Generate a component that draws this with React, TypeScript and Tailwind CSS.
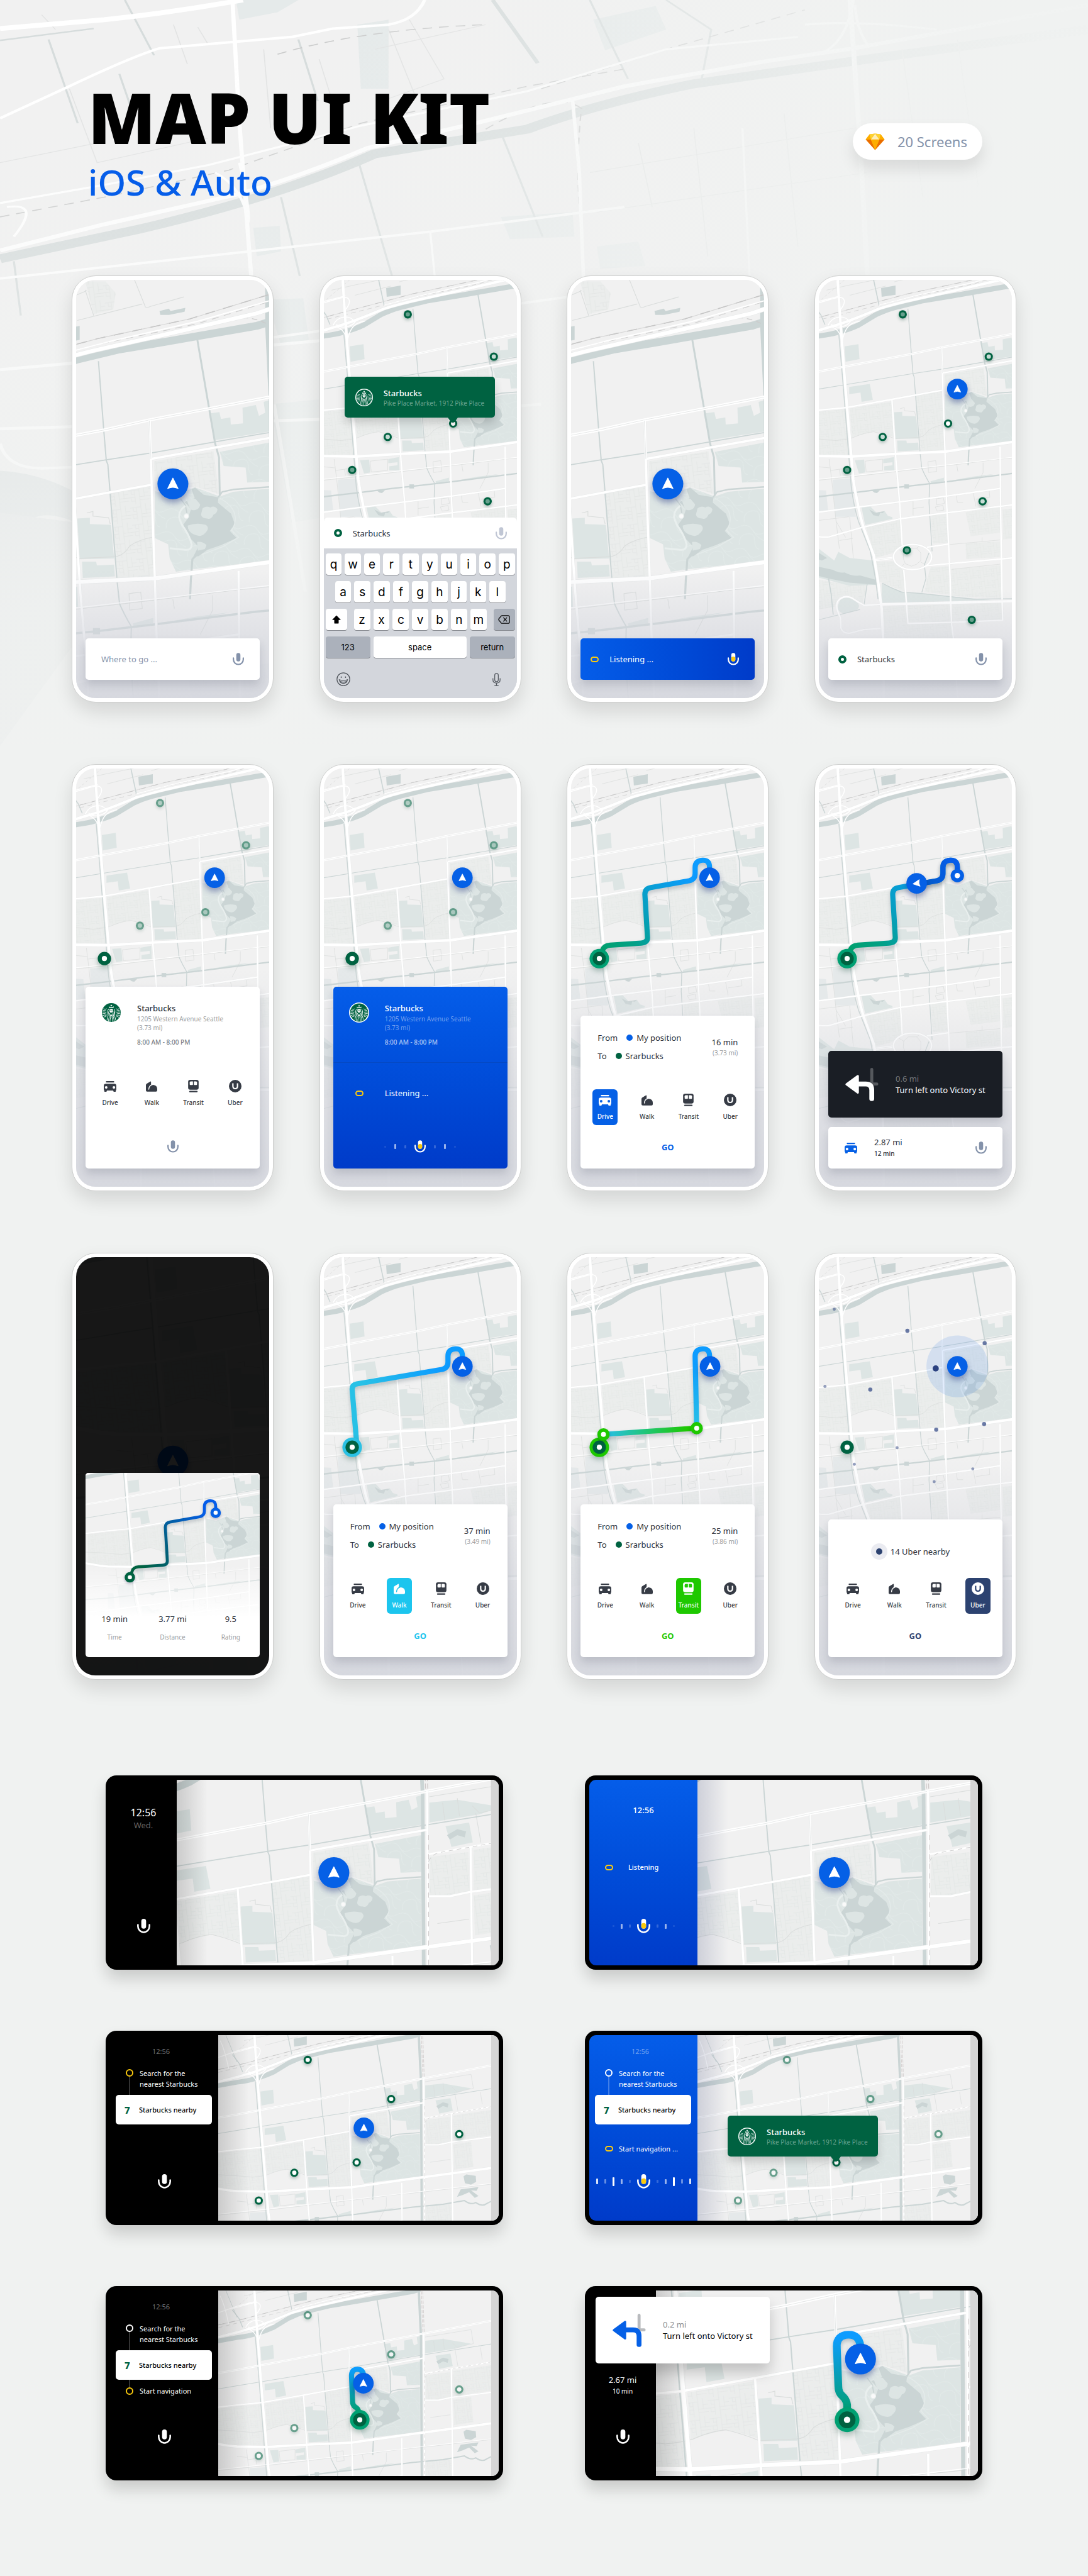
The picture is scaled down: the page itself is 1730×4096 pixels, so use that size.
import React from "react";

/* ------------------------------------------------------------------ */
/* Shared drawing data                                                  */
/* ------------------------------------------------------------------ */

const MAJOR_ROADS = [
  "M-60,333 L-20,340 L0,342 L63,343 L148,338 L245,333.5 L290,327 L375,315 L398,312 L560,290",
  "M36,-10 L40,54 L43,94 L46,134 L50,188 L55,250 L62,330 L67,388 Q70,410 75,431 Q80,460 88,484 L107,536 L115,585 L122,638 L125,700 L126,820",
  "M-60,113 L0,98 L43,85 Q80,72 117,56 Q150,46 187,38 L267,20 L375,-5 L420,-20",
  "M120,630 L375,624 L560,616",
];

const MID_ROADS = [
  "M-60,260 L0,253 L53,248 L142,232 L240,214",
  "M240,181 L375,157 L398,153",
  "M238.5,131 L240,181 L242,250 L245,333 L248,429 L251,491 L255,580 L256,625 L258,670 L262,700 L270,820",
  "M142,232 L147,308 L150,353 L157,433 L162,516",
  "M165,563 L170,625 L173,667 L257,665 L357,661 L356,625",
  "M-60,456 L0,451 L77,441 L248,420 L352,405",
  "M-10,497 Q5,500 20,499 L83,481 L157,464 L250,452 L375,437",
  "M352,324 L353,446 L356,621",
  "M210,519 L252,513",
  "M208,555 L375,540",
  "M120,630 L88,632 Q75,625 63,617 Q47,611 37,624 Q31,634 42,656 L43,676 Q47,687 60,686 L87,679 L120,677",
  "M401,243 L430,243 L458,237 L560,224",
  "M458,175 L461,410",
  "M399,100 L401,420",
  "M219,538 C219,551 203,562.5 182,562.5 C161,562.5 145,551 145,538 C145,525 161,513.5 182,513.5 C203,513.5 219,525 219,538 Z",
];

const DOUBLE_ROADS = [
  "M-60,188 L0,178 L47,169 L180,144 L238.5,131 L313,117 L375,105 L398,100.7 L560,70",
  "M110,544 L143,540",
];

const RAMPS = [
  "M-10,47 C20,40 30,34 42,34 C53,36 52,47 40,60",
  "M-40,56 L0,42 L42,31",
  "M12,93 C30,85 42,102 45,118",
  "M80,80 C50,85 50,105 45,118",
  "M18,88 C28,68 52,68 60,82",
  "M24,86 C34,96 54,92 62,80",
  "M-36,20 Q-26,40 -18,80",
];

const CANALS: { d: string; w: number }[] = [
  { d: "M-60,120 L0,109 Q25,106 40,101 Q60,96 77,88 L110,68 Q130,58 150,53 L200,41 L260,31 L300,24 L375,11 L391,6", w: 10 },
  { d: "M173,56 L180,147 L183,183 L185,188 L197,339 L200,366 Q206,380 215,395 L214,433 L220,527", w: 1.6 },
  { d: "M214,530 L205,553 L208,580 L200,607", w: 1.6 },
  { d: "M299,27 L322,161 L327,179 L328,228", w: 2.4 },
  { d: "M39,107 L47,201 L58,339 L63,402 Q68,440 77,469 L100,527 L110,580 L115,620", w: 1.8 },
  { d: "M-60,222 L0,212 L55,203 L183,182 L242,173 L375,150 L560,120", w: 1.4 },
  { d: "M-60,425 L0,421 L70,413 L133,405 L170,401 L213,396 L247,392 L375,376 L440,370 L486,362 Q500,372 510,366 Q524,376 534,368 L550,360", w: 2.8 },
  { d: "M106,-2 L117,49", w: 2 },
  { d: "M-10,50 L4,68 L12,87", w: 1.8 },
  { d: "M-30,-6 L0,66", w: 1.2 },
  { d: "M388.5,-60 L388.5,11 L393,106 L395,430", w: 5 },
  { d: "M301,301 L293,309 L291,336 L290,360", w: 2.6 },
  { d: "M326,230 L331,223 L345,220 L391,216.7", w: 2 },
  { d: "M278,232 L284,240 L286,250", w: 1.4 },
  { d: "M123,589 Q140,598 160,606 L200,609 L300,620 L375,619", w: 1.6 },
  { d: "M19,580 L24,610 L28,650", w: 2 },
  { d: "M94,590 L88,630", w: 1.6 },
  { d: "M0,660 L40,650 L80,640", w: 1.4 },
];

const LIGHT_BLOCKS = [
  "M60,250 L141,236 L147,306 Q125,298 107,295 Q88,299 64,306 Z",
  "M-50,262 L0,256 L53,251 L60,308 L62,340 L0,340 L-50,334 Z",
  "M187,224 L239,216 L244,331 L198,335 Z",
  "M244,184 L320,171 L327,226 L296,216 L275,218 L245,222 Z",
  "M92,480 L158,466 L163,516 L145,530 L110,540 Z",
  "M285,451 L352,440 L352,491 L295,498 Z",
  "M285,512 L352,508 L353,538 L286,542 Z",
  "M257,562 L353,554 L355,618 L258,614 Z",
  "M217,558 L252,556 L254,611 L205,606 L210,582 Z",
  "M112,547 L146,546 L165,566 L170,607 L118,586 Z",
  "M218,456 L249,453 L252,510 L221,512 Z",
  "M357,446 L391,442 L392,500 L358,504 Z",
  "M125,634 L256,630 L262,700 L270,820 L128,820 Z",
  "M259,630 L355,627 L356,659 L258,663 Z",
  "M0,582 L60,592 L94,592 L84,632 L60,613 L40,616 L30,635 L0,640 Z",
  "M403,190 L455,183 L457,236 L430,242 L403,242 Z",
  "M462,180 L545,168 L545,222 L462,235 Z",
  "M156,-46 L182,-46 L195,-31 L192,-10 L167,-4 Z",
  "M402,374 L458,370 L460,420 L402,420 Z",
  "M462,242 L500,236 L505,290 L464,296 Z",
];

const PARKS = [
  "M50,129 L77,125 L79,154 L52,159 Z",
  "M59,208 L99,202 L105,233 L83,237 L81,219 L59,222 Z",
  "M146,257 L162,256 L162,264 L189,265 L193,308 L149,309 Z",
  "M152,312 L170,312 L171,317 L193,316 L194,331 L153,333 Z",
  "M70,350 L88,349 L90,374 L78,376 Z",
  "M125,348 L146,344 L147,370 L127,370 L127,362 L143,360 L143,354 L125,356 Z",
  "M314,123 L327.5,121 L329.5,130 L341.5,128 L342,137 L357.6,135.6 L357,115.5 L374,112 L378,126 L386,122 L384,108 L391,106 L391,146 L321,157 Z",
  "M328,172 L391,160 L391,210 L363,211 L361,192 L333,190 Z",
  "M245,222 L270,228 L296,217 L328,229 L345,223 L391,219 L391,311 L293,322 L272,325 L264,308 L262,290 L245,282 Z",
  "M83,442 L100,440 L112,452 L128,449 L134,458 L143,461 L143,464 L90,476 Z",
  "M0,522 L30,545 L38,528 L60,540 L107,545 L112,592 L60,594 L0,578 Z",
  "M122,590 L167,607 L253,614 L340,622 L122,629 Z",
  "M42,620 Q60,612 76,628 Q84,640 60,646 Q40,652 36,636 Z",
  "M217,391 L243,384 L243,391 L218,396 Z",
  "M250,391 L300,382 L340,377 L300,386 Z",
  "M424,148 L456,143 L461,170 L432,176 L430,168 Z",
  "M402,116 L440,112 L500,122 L470,132 L402,143 Z",
];

const WATER = [
  "M296.6,217.5 L307.4,226.7 L326.3,230 L325.5,236.7 L342.3,250.8 L347.2,264 L340.7,272.9 L349.6,282 L329.5,291 L312,297 L301,305 L294,306 L300.6,293 L287.3,279 L281.3,264.9 L287.3,256.8 L291.4,244.8 L283,236 L296,231 L292,220 Z",
  "M121,16 L149,11 L149,29 L122,33 Z",
  "M98,446 L110,452 L128,449 L124,453 L119,452 L117,459 L106,457 Z",
  "M0,557 L27,563 Q40,570 50,568 Q66,576 80,574 L110,582 L111,592 L60,588 L20,580 L0,575 Z",
  "M0,530 L16,540 L6,545 L0,543 Z",
  "M166,397 H175 V405 H166 Z",
  "M103,409 L108,413 L113,414 L119,408 Z",
  "M251,-8 L263,-11 L265,-8 L284,-12 L283,-7 L263,-3 L252,-3 Z",
  "M484,310 L490,306 L510,309 L511,322 L500,328 L487,325 Z",
  "M470,354 L478,338 L516,333 L512,341 L500,340 L516,352 L508,356 L496,344 L482,350 Z",
  "M426,160 L440,152 L452,155 L450,163 L440,160 L430,166 Z",
];

const ISLANDS = [
  "M286,234 Q291,230 297,232 L303,239 Q302,245 297,246 Q291,248 289,242 Z",
  "M306,244 Q311,240 316,243 Q321,240 325,245 Q325,250 320,252 Q317,259 312,257 Q305,257 304,252 Z",
  "M287,266 Q298,262 310,265 Q316,269 309,276 Q304,282 294,277 Q287,273 287,266 Z",
  "M299,287 Q306,286 311,291 L309,296 L300,298 Z",
];

const GREY_STREETS = [
  "M-60,306 Q0,308 33,312 Q55,310 67,306 Q90,296 107,295 Q128,300 147,308 L192,306 Q204,306 213,292 Q225,284 242,281",
  "M-60,395 L0,389 L67,382 L247,361 L352,348 L375,346 L560,325",
  "M20,348 L25,388 L33,464 L40,522",
  "M0,467 L58,460",
  "M60,460 L67,540",
  "M0,363 L21,365 M23,370 L45,367 M40,368 L42,380",
  "M33,468 L52,500 M40,506 L66,502",
  "M212,353 L227,351 L229,372 L213,374 Z",
  "M228,425 L242,423 L244,434 L229,437 Z",
  "M226,441 L241,438 L243,447 L230,449 Z",
  "M319,355 L319,374 L303,405",
  "M268,360 L270,372",
  "M183,430 V457 M183,444 L204,441",
  "M267,418 L269,432 H280 M300,414 L305,440 M331,410 L332,422 L305,426",
  "M252,514 L320,508 L352,505",
  "M258,562 L352,552",
  "M165,529 L174,521 L190,521 L198,530 L198,545 L190,552 L180,556 L168,551 L164,541 Z M166,530 L156,524 M190,521 L196,516 M166,551 L160,557 M198,548 L207,553",
  "M146,4 L229,-17 M219,-48 L233,-13 Q236,-12 240,-14 L282,-26",
  "M156,-35 L167,-2 M144,-28 L158,-34",
  "M317,500 V508",
  "M420,116 L423,140 M440,110 L443,134 M460,120 L470,130 L505,122 L500,92 L402,108",
  "M413,280 L456,274",
  "M465,130 L472,170 M520,130 L524,156",
  "M15,20 L60,10 L140,-6",
  "M60,30 L130,12",
  "M90,352 L124,348 L124,370 L92,373 Z",
  "M158,250 L166,248 L166,254 L186,256 L188,264",
];

const BACKDROP_WHITE: { d: string; w: number }[] = [
  { d: "M0,58 L150,40 Q250,25 350,0", w: 10 },
  { d: "M0,240 L100,175 Q190,115 230,98 L420,75 L480,58 L560,50 Q600,40 612,0", w: 5 },
  { d: "M0,508 L150,455 L340,395 Q430,360 530,300 L700,245 L900,175 L1100,125 L1230,98 L1400,55 L1568,10", w: 8 },
  { d: "M0,412 L150,375 L300,335 L520,255 L760,185 L960,100 L1150,75", w: 4 },
  { d: "M335,0 L345,250 L362,560", w: 6 },
  { d: "M825,200 L835,350 L850,900", w: 5 },
  { d: "M1225,0 L1240,300 L1250,560", w: 7 },
  { d: "M1180,110 Q1220,90 1230,0 M1250,90 Q1235,60 1232,10 M1160,50 Q1230,40 1350,60", w: 4 },
  { d: "M10,420 Q60,410 20,480 M345,330 Q360,420 358,450 Q350,380 310,350", w: 4 },
  { d: "M0,565 L620,470 L900,420 M390,685 L830,600", w: 5 },
  { d: "M620,470 L628,580 M1070,260 L1085,700", w: 3 },
  { d: "M0,750 L470,690 M0,870 L480,850 L780,820", w: 6 },
  { d: "M0,900 Q10,950 60,950 L240,940 M395,820 L440,1200", w: 5 },
];

const BACKDROP_TEAL: { d: string; w: number }[] = [
  { d: "M0,525 L200,465 Q400,400 540,312 L760,262 Q860,210 1000,170 L1260,118 L1568,60", w: 18 },
  { d: "M70,80 L112,250 M180,0 L222,112 M172,150 L188,215 M430,80 L458,205", w: 3 },
  { d: "M710,0 L775,128", w: 6 },
  { d: "M850,0 L905,160 M960,0 L1025,60 L1010,170", w: 3 },
  { d: "M720,262 L782,480 M515,320 L565,560 M405,400 L432,560", w: 3 },
  { d: "M0,82 L135,58 M20,530 L30,640", w: 3 },
];

/* ------------------------------------------------------------------ */
/* Shared SVG definitions                                               */
/* ------------------------------------------------------------------ */

function SharedDefs() {
  return (
    <svg className="absolute size-0" aria-hidden="true">
      <defs>
        <pattern id="streets" width="26" height="22" patternUnits="userSpaceOnUse" patternTransform="rotate(-7)">
          <path
            d="M0,4 H14 V0 M14,4 V13 H26 M0,13 H8 V22 M8,13 V4 M20,0 V13 M14,17 H26 M14,13 V22 M3,13 V18 H8 M20,8 H26 M4,4 V9 H8"
            fill="none"
            stroke="#e2e5e4"
            strokeWidth="0.6"
          />
        </pattern>
        <pattern id="footpaths" width="34" height="30" patternUnits="userSpaceOnUse" patternTransform="rotate(12)">
          <path
            d="M0,6 Q10,0 17,8 T34,6 M4,30 Q0,18 10,14 T22,20 T30,30 M17,8 Q24,16 34,18"
            fill="none"
            stroke="#e5eceb"
            strokeWidth="0.6"
          />
        </pattern>
        <g id="city-map">
          <rect x="-400" y="-200" width="1300" height="1200" fill="#f1f1f1" />
          {LIGHT_BLOCKS.map((d) => (
            <g key={d}>
              <path d={d} fill="#ebedec" />
              <path d={d} fill="url(#streets)" />
            </g>
          ))}
          <path d="M27,388 L63,386 L72,460 L32,460 Z M0,408 L14,409 L18,447 L0,449 Z" fill="#e5e9ea" />
          {PARKS.map((d) => (
            <path key={d} d={d} fill="#dde5e4" />
          ))}
          <path d={PARKS[7]} fill="url(#footpaths)" />
          <path d={PARKS[8]} fill="url(#footpaths)" />
          <g fill="none" stroke="#dadddc" strokeWidth="0.9">
            {GREY_STREETS.map((d) => (
              <path key={d} d={d} />
            ))}
          </g>
          <g fill="none" stroke="#cbd5d5" strokeLinejoin="round">
            {CANALS.map((c) => (
              <path key={c.d} d={c.d} strokeWidth={c.w} />
            ))}
          </g>
          {WATER.map((d) => (
            <path key={d} d={d} fill="#cbd5d5" />
          ))}
          {ISLANDS.map((d) => (
            <path key={d} d={d} fill="#dde5e4" />
          ))}
          <path
            d="M284,241 Q276,246 276,255 Q278,264 283,270 Q290,281 292,290 Q292,298 284,297 L264,295"
            fill="none"
            stroke="#e9efee"
            strokeWidth="2.4"
          />
          <path
            d="M328,231 Q344,240 347,251 Q350,262 343,272 L352,281 L332,293 L305,303"
            fill="none"
            stroke="#e4ebea"
            strokeWidth="1.2"
          />
          <circle cx="285.3" cy="254" r="3" fill="#fafafa" stroke="#e9efee" strokeWidth="1" />
          <g fill="none">
            <path d="M-40,82 L0,73 L173,27 L290,2 L391,-29" stroke="#d6d6d6" strokeWidth="0.9" />
            <path d="M-40,82 L0,73 L173,27 L290,2 L391,-29" stroke="#c6c6c6" strokeWidth="1.2" strokeDasharray="13 11" />
            <path d="M-40,88 L0,78 L176,34 L300,8 L391,-20" stroke="#d0d0d0" strokeWidth="1" strokeDasharray="9 7" />
            <path d="M322,8 L340,3 Q368,-4 391,10" stroke="#cccccc" strokeWidth="1" strokeDasharray="7 5" />
            <path d="M5,38 L50,0" stroke="#d8d8d8" strokeWidth="0.8" strokeDasharray="5 4" />
            <path d="M394,-30 L394,11 L397,100 M397,-30 L397,11 L400,100" stroke="#cfc9c9" strokeWidth="1.1" strokeDasharray="7 3" />
          </g>
          <g fill="none" strokeLinejoin="round">
            {MID_ROADS.map((d) => (
              <path key={d} d={d} stroke="#e9ebeb" strokeWidth="3.6" />
            ))}
            {MAJOR_ROADS.map((d) => (
              <path key={d} d={d} stroke="#e8eaea" strokeWidth="6" />
            ))}
            {RAMPS.map((d) => (
              <path key={d} d={d} stroke="#ffffff" strokeWidth="1.8" />
            ))}
            {DOUBLE_ROADS.map((d) => (
              <g key={d}>
                <path d={d} stroke="#ffffff" strokeWidth="4" />
                <path d={d} stroke="#e6e8e8" strokeWidth="0.8" />
              </g>
            ))}
            {MID_ROADS.map((d) => (
              <path key={d} d={d} stroke="#ffffff" strokeWidth="2.8" />
            ))}
            {MAJOR_ROADS.map((d) => (
              <path key={d} d={d} stroke="#ffffff" strokeWidth="5" />
            ))}
            <path d="M117,49 L187,31 L300,5 L391,-21" stroke="#ffffff" strokeWidth="1.6" />
            <path d="M238,132 L240,181" stroke="#e6e8e8" strokeWidth="0.8" />
            <path d="M-60,393 L67,380 L247,359.5 L375,344.5 L560,323.5" stroke="#ffffff" strokeWidth="1.2" />
            <path d="M401,186 L550,160" stroke="#ffffff" strokeWidth="2.4" />
            <path d="M401,196 Q404,188 414,184 L550,160" stroke="#cfcfcf" strokeWidth="0.9" strokeDasharray="6 5" />
            <path d="M401,160 V420" stroke="#d3cfcf" strokeWidth="1" strokeDasharray="7 6" />
          </g>
        </g>
        <linearGradient id="phone-fade" x1="0" y1="0" x2="0" y2="1">
          <stop offset="0" stopColor="#d5d7de" stopOpacity="0" />
          <stop offset="0.6" stopColor="#d5d7de" stopOpacity="0.7" />
          <stop offset="1" stopColor="#d5d7de" stopOpacity="0.95" />
        </linearGradient>
        <linearGradient id="route-drive" gradientUnits="userSpaceOnUse" x1="60" y1="350" x2="255" y2="200">
          <stop offset="0" stopColor="#00a06e" />
          <stop offset="0.22" stopColor="#02a085" />
          <stop offset="0.45" stopColor="#069fbf" />
          <stop offset="0.9" stopColor="#0d9cff" />
        </linearGradient>
        <linearGradient id="route-ahead" gradientUnits="userSpaceOnUse" x1="190" y1="220" x2="260" y2="200">
          <stop offset="0" stopColor="#045abf" />
          <stop offset="1" stopColor="#055de9" />
        </linearGradient>
        <linearGradient id="route-done" gradientUnits="userSpaceOnUse" x1="60" y1="350" x2="255" y2="200">
          <stop offset="0.1" stopColor="#006241" />
          <stop offset="0.95" stopColor="#055de9" />
        </linearGradient>
        <linearGradient id="route-walk" gradientUnits="userSpaceOnUse" x1="60" y1="340" x2="240" y2="200">
          <stop offset="0.3" stopColor="#28c1e6" />
          <stop offset="0.9" stopColor="#0d9cff" />
        </linearGradient>
        <linearGradient id="route-train" gradientUnits="userSpaceOnUse" x1="63" y1="344" x2="244" y2="332">
          <stop offset="0.05" stopColor="#28bfe0" />
          <stop offset="0.4" stopColor="#20c586" />
          <stop offset="0.9" stopColor="#1ec800" />
        </linearGradient>
        <linearGradient id="route-foot" gradientUnits="userSpaceOnUse" x1="244" y1="332" x2="244" y2="190">
          <stop offset="0" stopColor="#28c1e6" />
          <stop offset="0.9" stopColor="#0d9cff" />
        </linearGradient>
        <linearGradient id="route-car" gradientUnits="userSpaceOnUse" x1="0" y1="235" x2="0" y2="150">
          <stop offset="0" stopColor="#00a072" />
          <stop offset="1" stopColor="#0d9cff" />
        </linearGradient>
        <linearGradient id="route-car-near" gradientUnits="userSpaceOnUse" x1="0" y1="235" x2="0" y2="90">
          <stop offset="0" stopColor="#00a072" />
          <stop offset="1" stopColor="#0d9cff" />
        </linearGradient>
        <linearGradient id="panel-shade" x1="0" y1="0" x2="1" y2="0">
          <stop offset="0" stopColor="#14205a" stopOpacity="0.16" />
          <stop offset="1" stopColor="#14205a" stopOpacity="0" />
        </linearGradient>
        <linearGradient id="panel-shade-dark" x1="0" y1="0" x2="1" y2="0">
          <stop offset="0" stopColor="#000000" stopOpacity="0.16" />
          <stop offset="1" stopColor="#000000" stopOpacity="0" />
        </linearGradient>
        <linearGradient id="card-fade" x1="0" y1="0" x2="0" y2="1">
          <stop offset="0" stopColor="#ffffff" stopOpacity="0" />
          <stop offset="1" stopColor="#ffffff" />
        </linearGradient>
        <linearGradient id="backdrop-right" x1="0" y1="0" x2="1" y2="0">
          <stop offset="0.3" stopColor="#f0f2f1" stopOpacity="0" />
          <stop offset="0.95" stopColor="#f0f2f1" stopOpacity="0.95" />
        </linearGradient>
        <linearGradient id="backdrop-down" x1="0.1" y1="0" x2="0.35" y2="1">
          <stop offset="0.1" stopColor="#f0f2f1" stopOpacity="0" />
          <stop offset="0.75" stopColor="#f0f2f1" stopOpacity="0.85" />
        </linearGradient>
      </defs>
    </svg>
  );
}

function Backdrop() {
  return (
    <svg
      className="absolute inset-x-0 top-0 h-[1186px] w-full"
      viewBox="0 0 1568 1513"
      preserveAspectRatio="none"
      aria-hidden="true"
    >
      <rect width="1568" height="1513" fill="#f1f1f1" />
      <g fill="#e5eaea">
        <path d="M365,462 L403,458 L405,510 L370,520 Z" />
        <path d="M855,40 L945,12 L960,60 L872,102 Z" />
        <path d="M722,440 L825,430 L828,480 L735,485 Z" />
        <path d="M385,608 L437,605 L445,690 L405,700 Z" />
        <path d="M340,0 L430,0 L400,25 L345,40 Z" />
        <path d="M515,50 L560,40 L560,180 L520,180 Z" />
        <path d="M860,500 L920,490 L930,540 L865,545 Z" />
        <path d="M390,820 L460,810 L465,1050 L420,1060 Z" />
      </g>
      <path d="M0,955 Q60,960 110,1000 L110,1060 Q60,1030 40,1060 Q20,1080 0,1040 Z" fill="#dadfe0" />
      <path d="M0,1040 L110,1060 L110,1300 L0,1513 Z" fill="#e0e3e4" />
      <g fill="none" stroke="#d6dcdc">
        {BACKDROP_TEAL.map((l) => (
          <path key={l.d} d={l.d} strokeWidth={l.w} />
        ))}
      </g>
      <g fill="none" stroke="#e2e3e3" strokeWidth="1.5">
        <path d="M60,30 L80,60 M250,50 L270,130 M285,55 L300,90 L380,80 M590,40 L640,160 M540,100 L700,50 M600,200 L560,60 M380,100 L390,260 M100,180 L140,330 L300,280 M460,120 L480,210 M0,330 L140,290 M640,160 L560,200" />
        <path d="M920,290 L940,420 M1000,260 L1020,520 M1130,230 L1150,500 M850,350 L1230,260 M860,430 L1250,350 M1300,100 L1330,400 M1380,80 L1410,380" />
      </g>
      <g fill="none" stroke="#cbcccc" strokeWidth="2" strokeDasharray="14 10">
        <path d="M0,440 L150,400 L330,345 L520,250 L760,175 L900,140" />
        <path d="M400,110 Q520,60 700,50" />
        <path d="M700,262 Q800,180 838,220 Q830,320 835,420" />
        <path d="M780,180 L960,100 L1160,20" />
      </g>
      <g fill="none" stroke="#ffffff" strokeLinejoin="round">
        {BACKDROP_WHITE.map((l) => (
          <path key={l.d} d={l.d} strokeWidth={l.w} />
        ))}
      </g>
      <rect width="1568" height="1513" fill="url(#backdrop-right)" />
      <rect width="1568" height="1513" fill="url(#backdrop-down)" />
    </svg>
  );
}

/* ------------------------------------------------------------------ */
/* Map pieces                                                           */
/* ------------------------------------------------------------------ */

type View = { x: number; y: number; scale: number };

const CITY: View = { x: 0, y: 0, scale: 1 };

function MapScene({
  viewBox,
  view,
  children,
}: {
  viewBox: string;
  view: View;
  children?: React.ReactNode;
}) {
  return (
    <svg className="absolute inset-0 size-full" viewBox={viewBox} preserveAspectRatio="xMidYMid slice" aria-hidden="true">
      <use
        href="#city-map"
        transform={`translate(${-view.x * view.scale} ${-view.y * view.scale}) scale(${view.scale})`}
      />
      {children}
    </svg>
  );
}

function Marker({ x, y, r = 20, rotate = 0 }: { x: number; y: number; r?: number; rotate?: number }) {
  const s = r === 30 ? 1 : 0.66;
  return (
    <g transform={`translate(${x} ${y})`}>
      <circle r={r} fill="#0560e6" className="[filter:drop-shadow(0_7px_6px_rgba(20,40,120,0.4))]" />
      <path
        d="M0,-11 L10,9 Q0,4.5 -10,9 Z"
        fill="#ffffff"
        stroke="#ffffff"
        strokeWidth="1.6"
        strokeLinejoin="round"
        transform={`rotate(${rotate}) scale(${s})`}
      />
    </g>
  );
}

function Pin({ x, y, tone = 1, faded = false }: { x: number; y: number; tone?: number; faded?: boolean }) {
  return (
    <g opacity={faded ? 0.56 : 1} className="[filter:drop-shadow(0_3px_3px_rgba(0,60,40,0.3))]">
      <circle cx={x} cy={y} r="8" fill="#006241" />
      <circle cx={x} cy={y} r="4.2" fill="#ffffff" opacity={tone} />
    </g>
  );
}

function Destination({ x, y, ring, big = false }: { x: number; y: number; ring?: string; big?: boolean }) {
  const s = big ? 1.26 : 1;
  return (
    <g transform={`translate(${x} ${y}) scale(${s})`} className="[filter:drop-shadow(0_5px_5px_rgba(0,60,40,0.3))]">
      {ring && <circle r="19" fill={ring} />}
      <circle r="13" fill="#006241" />
      <circle r="5" fill="#ffffff" />
    </g>
  );
}

function Stop({ x, y, color, r = 12 }: { x: number; y: number; color: string; r?: number }) {
  return (
    <g className="[filter:drop-shadow(0_3px_3px_rgba(0,0,60,0.25))]">
      <circle cx={x} cy={y} r={r} fill={color} />
      <circle cx={x} cy={y} r={r * 0.4} fill="#ffffff" />
    </g>
  );
}

function Route({ d, stroke, width = 10 }: { d: string; stroke: string; width?: number }) {
  return (
    <path
      d={d}
      fill="none"
      stroke={`url(#${stroke})`}
      strokeWidth={width}
      strokeLinejoin="round"
      className="[filter:drop-shadow(0_5px_4px_rgba(20,40,60,0.22))]"
    />
  );
}

const HOOK = "Q241,215.5 241,204 L241,192 Q241,179 255,178 Q269,177 269,192 L269,206";
const DRIVE_ROUTE = `M55,369 L61,353 Q64,344 76,343 L136,339 Q149,338 148.5,328 L143.5,245 Q143,233 155,231 L229,218 ${HOOK}`;
const WALK_ROUTE = `M64,364 L55,258 Q54,248 64,246 L229,218 ${HOOK}`;

const PHONE_PINS: { x: number; y: number; tone: number }[] = [
  { x: 163, y: 67, tone: 0.4 },
  { x: 330, y: 149, tone: 0.78 },
  { x: 251, y: 279, tone: 1 },
  { x: 124, y: 305, tone: 0.78 },
];

const AUTO_PINS: { x: number; y: number }[] = [
  { x: 383, y: 48 },
  { x: 545, y: 124 },
  { x: 677, y: 192 },
  { x: 357, y: 267 },
  { x: 288, y: 321 },
];

/* ------------------------------------------------------------------ */
/* Icons                                                                */
/* ------------------------------------------------------------------ */

function MicIcon({ className, active = false }: { className: string; active?: boolean }) {
  return (
    <svg viewBox="0 0 22 24" className={className} aria-hidden="true">
      <rect x="7" y="0" width="8" height="16.5" rx="4" fill="currentColor" />
      {active && <rect x="7" y="7" width="8" height="9.5" rx="4" fill="#f9c90e" />}
      <path
        d="M1.4,10 V12.6 A9.6,9.8 0 0 0 20.6,12.6 V10"
        fill="none"
        stroke="currentColor"
        strokeWidth="2.7"
        strokeLinecap="round"
      />
    </svg>
  );
}

function CarIcon({ cut = "#ffffff" }: { cut?: string }) {
  return (
    <svg viewBox="0 0 24 20.5" className="h-[17px] w-5" aria-hidden="true">
      <rect x="4" y="0" width="16" height="2.8" rx="1.3" fill="currentColor" />
      <path
        d="M4,5 H20 Q24,5 24,9 V16 Q24,17.5 23,18 V19.5 Q23,20.5 22,20.5 H19.6 Q18.6,20.5 18.4,19.5 L18,18 H6 L5.6,19.5 Q5.4,20.5 4.4,20.5 H2 Q1,20.5 1,19.5 V18 Q0,17.5 0,16 V9 Q0,5 4,5 Z"
        fill="currentColor"
      />
      <circle cx="4.6" cy="12.2" r="2.5" fill={cut} />
      <circle cx="19.4" cy="12.2" r="2.5" fill={cut} />
    </svg>
  );
}

function WalkIcon({ cut = "#ffffff" }: { cut?: string }) {
  return (
    <svg viewBox="0 0 22 20" className="h-[17px] w-[18px]" aria-hidden="true">
      <path
        d="M2.5,20 Q0,20 0,17.5 V7.5 Q0,5.5 1.8,4.5 L8.5,0.4 Q10,0 10,1.6 V5.6 Q11.5,7 14,7 Q22,8 22,15 V17.5 Q22,20 19.5,20 Z"
        fill="currentColor"
      />
      <path d="M5.6,15.5 Q6,8.2 12.4,6.6" fill="none" stroke={cut} strokeWidth="1.7" strokeLinecap="round" />
      <path d="M10.1,4.6 L15,6.4 L10,6.6 Z" fill={cut} />
    </svg>
  );
}

function TransitIcon({ cut = "#ffffff" }: { cut?: string }) {
  return (
    <svg viewBox="0 0 20 24" className="h-5 w-[17px]" aria-hidden="true">
      <rect x="0" y="0" width="20" height="19" rx="4" fill="currentColor" />
      <rect x="2" y="21" width="16" height="2.8" rx="1.3" fill="currentColor" />
      <path d="M5,3 H9.2 V8.8 Q9.2,10 8,10 H4.2 Q3,10 3,8.8 V5 Q3,3 5,3 Z" fill={cut} />
      <path d="M15,3 H10.8 V8.8 Q10.8,10 12,10 H15.8 Q17,10 17,8.8 V5 Q17,3 15,3 Z" fill={cut} />
    </svg>
  );
}

function UberIcon({ cut = "#ffffff" }: { cut?: string }) {
  return (
    <svg viewBox="0 0 24 24" className="size-5" aria-hidden="true">
      <circle cx="12" cy="12" r="12" fill="currentColor" />
      <path d="M7.6,6.6 V12 Q7.6,16.8 12,16.8 Q16.4,16.8 16.4,12 V6.6" fill="none" stroke={cut} strokeWidth="2.6" />
    </svg>
  );
}

function TurnLeftIcon({ arrow, road }: { arrow: string; road: string }) {
  return (
    <svg viewBox="0 0 65 66" className="size-[53px] shrink-0" aria-hidden="true">
      <path d="M52,3 V32 H62" fill="none" stroke={road} strokeWidth="6" strokeLinecap="round" strokeLinejoin="round" />
      <path d="M24,32 H40 Q52,32 52,44 V61" fill="none" stroke={arrow} strokeWidth="9.6" strokeLinecap="round" />
      <path d="M2,32.5 L24.5,16 V49 Z" fill={arrow} stroke={arrow} strokeWidth="4" strokeLinejoin="round" />
    </svg>
  );
}

function SirenLogo({ ringed = false, className = "size-[30px]" }: { ringed?: boolean; className?: string }) {
  return (
    <svg viewBox="0 0 36 36" className={`${className} shrink-0`} role="img" aria-label="Starbucks logo">
      {ringed && <circle cx="18" cy="18" r="18" fill="#ffffff" />}
      <g transform={ringed ? "translate(1.8 1.8) scale(0.9)" : undefined}>
        <circle cx="18" cy="18" r="18" fill="#006241" />
        <path d="M18,2.4 L18.6,3.8 L20.2,3.9 L19,4.9 L19.4,6.4 L18,5.6 L16.6,6.4 L17,4.9 L15.8,3.9 L17.4,3.8 Z" fill="#ffffff" />
        <path d="M13.2,6 L15.4,7.9 L18,7.1 L20.6,7.9 L22.8,6 L22,9.6 Q18,8.4 14,9.6 Z" fill="#ffffff" />
        <path d="M14.6,11.6 Q18,9.8 21.4,11.6 Q22.2,16.6 18,19.2 Q13.8,16.6 14.6,11.6 Z" fill="#ffffff" />
        <path d="M15.2,13.4 H17.2 M18.8,13.4 H20.8 M18,13.6 V15.8 M16.9,17.3 Q18,18 19.1,17.3" stroke="#006241" strokeWidth="0.8" fill="none" />
        <g fill="none" stroke="#ffffff" strokeWidth="1.1">
          <path d="M12.8,11 Q10,15 11.4,19.4 Q12.8,24 10.6,28 Q9.6,30.4 10,32.6" />
          <path d="M13,16 Q12.2,19 13.6,22 Q15,26 13.2,30 Q12.6,32 12.8,34.4" />
          <path d="M14.8,19.4 Q15.6,22 16.4,24.4 Q17,28 15.8,31 Q15.4,33 15.6,35.4" />
          <path d="M23.2,11 Q26,15 24.6,19.4 Q23.2,24 25.4,28 Q26.4,30.4 26,32.6" />
          <path d="M23,16 Q23.8,19 22.4,22 Q21,26 22.8,30 Q23.4,32 23.2,34.4" />
          <path d="M21.2,19.4 Q20.4,22 19.6,24.4 Q19,28 20.2,31 Q20.6,33 20.4,35.4" />
        </g>
        <path d="M18,20.6 L19.4,24 Q18,25.6 16.6,24 Z" fill="#ffffff" />
        <g fill="none" stroke="#ffffff" strokeWidth="1">
          <path d="M3.4,10 L5.6,12.4 L9,10.6 M2,13.6 Q6,13.2 8.4,15.4 M0.8,17 Q5.6,16 8.6,18.6 M0.6,20.4 Q5.2,18.6 9,21.4 M1.4,24 Q5.4,21.4 9,24 M3.2,27.4 Q6,24.4 8.4,26.4" />
          <path d="M32.6,10 L30.4,12.4 L27,10.6 M34,13.6 Q30,13.2 27.6,15.4 M35.2,17 Q30.4,16 27.4,18.6 M35.4,20.4 Q30.8,18.6 27,21.4 M34.6,24 Q30.6,21.4 27,24 M32.8,27.4 Q30,24.4 27.6,26.4" />
        </g>
      </g>
    </svg>
  );
}

function GemIcon() {
  return (
    <svg viewBox="0 0 32 28" className="h-[27px] w-[31px]" aria-hidden="true">
      <path d="M7,1.5 L16,0.5 L25,1.5 L31.5,10 L16,27.5 L0.5,10 Z" fill="#fdb300" />
      <path d="M0.5,10 H9 L16,27.5 Z" fill="#ea6c00" />
      <path d="M31.5,10 H23 L16,27.5 Z" fill="#ea6c00" />
      <path d="M9,10 H23 L16,27.5 Z" fill="#fdad00" />
      <path d="M16,0.5 L9,10 H23 Z" fill="#feeeb7" />
      <path d="M7,1.5 L0.5,10 H9 Z M25,1.5 L31.5,10 H23 Z" fill="#fdad00" />
      <path d="M7,1.5 L16,0.5 L9,10 Z M25,1.5 L16,0.5 L23,10 Z" fill="#fdd231" />
    </svg>
  );
}

function ListeningMark() {
  return <span className="h-[9px] w-[13px] shrink-0 rounded-[5px] border-2 border-[#f9c90e]" />;
}

function PlaceRing() {
  return <span className="size-[13px] shrink-0 rounded-full border-4 border-[#006241] bg-white" />;
}

const QUIET_BARS = ["h-[5px] opacity-20", "h-[8px] opacity-60", "h-[3px] opacity-10"];
const LOUD_BARS = [
  "h-[5px] opacity-20",
  "h-[8px] opacity-60",
  "h-[14px] opacity-100",
  "h-[7px] opacity-40",
  "h-[9px] opacity-85",
];

function Waveform({ bars, gap, mic }: { bars: string[]; gap: string; mic: string }) {
  return (
    <div className={`flex items-center justify-center text-white ${gap}`}>
      {[...bars].reverse().map((b) => (
        <span key={`l-${b}`} className={`w-[3px] rounded-[1px] bg-white ${b}`} />
      ))}
      <button type="button" aria-label="Stop listening">
        <MicIcon active className={mic} />
      </button>
      {bars.map((b) => (
        <span key={`r-${b}`} className={`w-[3px] rounded-[1px] bg-white ${b}`} />
      ))}
    </div>
  );
}

/* ------------------------------------------------------------------ */
/* Phone                                                                */
/* ------------------------------------------------------------------ */

const CARD = "rounded-[5px] shadow-[0_8px_14px_rgba(30,35,60,0.16)]";

function Phone({
  label,
  view = CITY,
  scene,
  fadeFrom = 390,
  children,
}: {
  label: string;
  view?: View;
  scene?: React.ReactNode;
  fadeFrom?: number;
  children?: React.ReactNode;
}) {
  return (
    <article
      aria-label={label}
      className="w-[321px] rounded-[38px] border border-[#cdcecd] bg-white p-[6px] shadow-[0_14px_30px_rgba(0,0,0,0.12)]"
    >
      <div className="relative flex h-[665px] flex-col justify-end overflow-hidden rounded-[31px] bg-[#f1f1f1]">
        <MapScene viewBox="0 0 375 812" view={view}>
          <rect x="0" y={fadeFrom} width="375" height={812 - fadeFrom} fill="url(#phone-fade)" />
          {scene}
        </MapScene>
        <div className="relative flex flex-col">{children}</div>
      </div>
    </article>
  );
}

function Bottom({ children }: { children: React.ReactNode }) {
  return <div className="flex flex-col gap-[15px] px-[15px] pb-[29px]">{children}</div>;
}

function MicButton({ className = "text-[#8492aa]" }: { className?: string }) {
  return (
    <button type="button" aria-label="Speak" className={className}>
      <MicIcon className="h-5 w-[18px]" />
    </button>
  );
}

type Mode = "Drive" | "Walk" | "Transit" | "Uber";

const MODES: { name: Mode; icon: (p: { cut?: string }) => React.ReactElement; color: string; active: string; go: string }[] = [
  { name: "Drive", icon: CarIcon, color: "#0560e6", active: "bg-[#0560e6] text-white", go: "text-[#0560e6]" },
  { name: "Walk", icon: WalkIcon, color: "#1cc5ee", active: "bg-[#1cc5ee] text-white", go: "text-[#1cc5ee]" },
  { name: "Transit", icon: TransitIcon, color: "#1ec800", active: "bg-[#1ec800] text-white", go: "text-[#1ec800]" },
  { name: "Uber", icon: UberIcon, color: "#2c4270", active: "bg-[#2c4270] text-white", go: "text-[#2c4270]" },
];

function ModeTabs({ active }: { active?: Mode }) {
  return (
    <div className="grid grid-cols-4 px-[6px]">
      {MODES.map((m) => {
        const Icon = m.icon;
        const on = m.name === active;
        return (
          <button
            key={m.name}
            type="button"
            aria-pressed={on}
            className={`flex h-[57px] w-10 flex-col items-center justify-self-center rounded-[6px] pt-[7px] ${
              on ? m.active : "text-[#363b45]"
            }`}
          >
            <span className="flex h-5 items-center">
              <Icon cut={on ? m.color : "#ffffff"} />
            </span>
            <span className="mt-[9px] text-[10px] leading-[14px] font-medium">{m.name}</span>
          </button>
        );
      })}
    </div>
  );
}

function TripCard({ mode, header }: { mode: Mode; header: React.ReactNode }) {
  const m = MODES.find((e) => e.name === mode)!;
  return (
    <section className={`bg-white pb-[22px] ${CARD}`}>
      {header}
      <ModeTabs active={mode} />
      <button type="button" className={`mx-auto mt-[23px] block h-6 px-4 text-[13px] leading-6 font-bold ${m.go}`}>
        GO
      </button>
    </section>
  );
}

function TripHeader({ time, distance }: { time: string; distance: string }) {
  return (
    <div className="flex h-[117px] justify-between px-[27px] pt-[25px] text-[13px] leading-5 text-[#2d323c]">
      <div className="flex flex-col gap-[9px]">
        <p className="flex items-center">
          From
          <span className="ml-[14px] size-[10px] rounded-full bg-[#0560e6]" />
          <span className="ml-[6px]">My position</span>
        </p>
        <p className="flex items-center">
          To
          <span className="ml-[14px] size-[10px] rounded-full bg-[#006241]" />
          <span className="ml-[6px]">Srarbucks</span>
        </p>
      </div>
      <div className="pt-[7px] text-right">
        <p>{time}</p>
        <p className="text-[10px] leading-[14px] text-[#9c9ea1]">{distance}</p>
      </div>
    </div>
  );
}

function PlaceInfo({ blue = false }: { blue?: boolean }) {
  return (
    <div className={`flex pt-6 ${blue ? "gap-[25px] pl-[25px]" : "gap-[26px] pl-[26px]"}`}>
      <SirenLogo ringed={blue} className={blue ? "mt-[1px] size-8" : "mt-[2px] size-[30px]"} />
      <div>
        <h3 className={`text-[13px] leading-5 font-medium ${blue ? "text-white" : "text-[#2d323c]"}`}>Starbucks</h3>
        <p className={`text-[10px] leading-[14px] ${blue ? "text-white/45" : "text-[#9c9ea1]"}`}>
          1205 Western Avenue Seattle
          <br />
          (3.73 mi)
        </p>
        <p className={`mt-[9px] text-[10px] leading-[14px] font-medium ${blue ? "text-white/65" : "text-[#7b7e83]"}`}>
          8:00 AM - 8:00 PM
        </p>
      </div>
    </div>
  );
}

function Callout({ className }: { className: string }) {
  return (
    <div className={`absolute flex h-[65px] w-[239px] items-center rounded-[5px] bg-[#006241] pl-[17px] shadow-[0_8px_14px_rgba(0,0,0,0.16)] ${className}`}>
      <SirenLogo ringed className="size-[28px]" />
      <div className="ml-[17px] whitespace-nowrap">
        <h3 className="text-[13px] leading-[18px] font-medium text-white">Starbucks</h3>
        <p className="text-[10px] leading-[14px] text-[#6ba38e]">Pike Place Market, 1912 Pike Place</p>
      </div>
      <svg viewBox="0 0 20 10" className="absolute top-full left-[164px] h-2 w-4" aria-hidden="true">
        <path d="M0,0 H20 L14,8 Q10,12 6,8 Z" fill="#006241" />
      </svg>
    </div>
  );
}

function SearchField({ label, placeholder, value }: { label: string; placeholder?: string; value?: string }) {
  return (
    <input
      type="text"
      aria-label={label}
      placeholder={placeholder}
      defaultValue={value}
      className="min-w-0 flex-1 bg-transparent text-[13px] leading-5 text-[#2d323c] outline-none placeholder:text-[#8492aa] placeholder:opacity-100"
    />
  );
}

const KEY = "flex h-[34px] items-center justify-center rounded-[4px] shadow-[0_1px_0_#898c92]";

function Keyboard() {
  return (
    <div className="flex h-[238px] flex-col gap-[10px] bg-[#d3d6dc] px-[3px] pt-2 font-[Inter,sans-serif] text-[19px] leading-none text-black">
      <div className="flex gap-[5px]">
        {"qwertyuiop".split("").map((k) => (
          <button key={k} type="button" className={`${KEY} flex-1 bg-white`}>
            {k}
          </button>
        ))}
      </div>
      <div className="flex gap-[5px] px-[15px]">
        {"asdfghjkl".split("").map((k) => (
          <button key={k} type="button" className={`${KEY} flex-1 bg-white`}>
            {k}
          </button>
        ))}
      </div>
      <div className="flex gap-[11px]">
        <button type="button" aria-label="Shift" className={`${KEY} w-[34px] bg-white`}>
          <svg viewBox="0 0 20 18" className="h-[14px] w-4" aria-hidden="true">
            <path d="M10,0.5 L19,10 H14.5 V16 Q14.5,17.5 13,17.5 H7 Q5.5,17.5 5.5,16 V10 H1 Z" />
          </svg>
        </button>
        <div className="flex flex-1 gap-[5px]">
          {"zxcvbnm".split("").map((k) => (
            <button key={k} type="button" className={`${KEY} flex-1 bg-white`}>
              {k}
            </button>
          ))}
        </div>
        <button type="button" aria-label="Delete" className={`${KEY} w-[34px] bg-[#abb1bb]`}>
          <svg viewBox="0 0 24 18" className="h-[14px] w-[19px]" fill="none" stroke="#000000" strokeWidth="1.6" aria-hidden="true">
            <path d="M8,1 H20 Q23,1 23,4 V14 Q23,17 20,17 H8 Q7,17 6,16 L1.4,10.4 Q0.6,9 1.4,7.6 L6,2 Q7,1 8,1 Z" />
            <path d="M10.5,5 L18,13 M18,5 L10.5,13" />
          </svg>
        </button>
      </div>
      <div className="flex gap-[5px] text-[13px]">
        <button type="button" className={`${KEY} w-[71px] bg-[#abb1bb]`}>
          123
        </button>
        <button type="button" className={`${KEY} flex-1 bg-white`}>
          space
        </button>
        <button type="button" className={`${KEY} w-[72px] bg-[#abb1bb]`}>
          return
        </button>
      </div>
      <div className="flex items-center justify-between px-[17px] pt-[13px] text-[#50555c]">
        <button type="button" aria-label="Emoji">
          <svg viewBox="0 0 27 27" className="size-[22px]" fill="none" stroke="currentColor" strokeWidth="1.5" aria-hidden="true">
            <circle cx="13.5" cy="13.5" r="12.5" />
            <ellipse cx="9.3" cy="9.5" rx="1.1" ry="1.6" fill="currentColor" stroke="none" />
            <ellipse cx="17.7" cy="9.5" rx="1.1" ry="1.6" fill="currentColor" stroke="none" />
            <path d="M5.5,14.5 Q13.5,18 21.5,14.5 Q20,21.5 13.5,21.5 Q7,21.5 5.5,14.5 Z" />
            <path d="M7,18 Q13.5,20.5 20,18" />
          </svg>
        </button>
        <button type="button" aria-label="Dictate" className="mr-[6px]">
          <svg viewBox="0 0 16 26" className="h-[21px] w-[13px]" fill="none" stroke="currentColor" strokeWidth="1.5" strokeLinecap="round" aria-hidden="true">
            <rect x="4.5" y="1" width="7" height="16" rx="3.5" />
            <path d="M1,11 V14 Q1,20 8,20 Q15,20 15,14 V11 M8,20 V25 M4.5,25 H11.5" />
          </svg>
        </button>
      </div>
    </div>
  );
}

/* ------------------------------------------------------------------ */
/* Phone screens                                                        */
/* ------------------------------------------------------------------ */

const NEAR: View = { x: 144.4, y: -47.8, scale: 1.52 };

const NEARBY_CABS: [number, number, number][] = [
  [30, 101, 3], [172, 143, 4], [322, 167, 4], [12, 251, 3], [100, 257, 4], [228, 335, 4],
  [321, 324, 4], [152, 370, 3], [69, 402, 3], [299, 411, 3], [224, 436, 3],
];

function FadedPins() {
  return (
    <>
      {PHONE_PINS.map((p) => (
        <Pin key={p.x} x={p.x} y={p.y} tone={0.5} faded />
      ))}
      <Destination x={55} y={369} />
      <Marker x={269} y={212} />
    </>
  );
}

function PhoneRows() {
  return (
    <div className="flex flex-col gap-[98px] px-[114px]">
      <div className="flex justify-between">
        <Phone label="Search" view={NEAR} fadeFrom={560} scene={<Marker x={188} y={396} r={30} />}>
          <Bottom>
            <div className={`flex h-[66px] items-center bg-white px-[25px] ${CARD}`}>
              <SearchField label="Destination" placeholder="Where to go ..." />
              <MicButton />
            </div>
          </Bottom>
        </Phone>

        <Phone
          label="Search with keyboard"
          fadeFrom={600}
          scene={
            <>
              {PHONE_PINS.map((p) => (
                <Pin key={p.x} {...p} />
              ))}
              <Pin x={55} y={369} tone={0.4} />
              <Pin x={318} y={430} tone={0.4} />
            </>
          }
        >
          <Callout className="-top-[224px] left-[33px]" />
          <div className="flex h-[49px] items-center rounded-t-[6px] bg-white pr-4 pl-4">
            <PlaceRing />
            <span className="w-[17px]" />
            <SearchField label="Search" value="Starbucks" />
            <MicButton className="text-[#c0c6d4]" />
          </div>
          <Keyboard />
        </Phone>

        <Phone label="Listening" view={NEAR} fadeFrom={560} scene={<Marker x={188} y={396} r={30} />}>
          <Bottom>
            <div className={`flex h-[66px] items-center bg-linear-to-r from-[#055de9] to-[#003bc9] pr-[25px] pl-4 ${CARD}`}>
              <ListeningMark />
              <span className="ml-[17px] flex-1 text-[13px] leading-5 text-white">Listening ...</span>
              <button type="button" aria-label="Stop listening" className="text-white">
                <MicIcon active className="h-5 w-[18px]" />
              </button>
            </div>
          </Bottom>
        </Phone>

        <Phone
          label="Results"
          fadeFrom={600}
          scene={
            <>
              {PHONE_PINS.map((p) => (
                <Pin key={p.x} {...p} />
              ))}
              <Pin x={55} y={369} tone={0.4} />
              <Pin x={318} y={430} tone={0.78} />
              <Pin x={171} y={525} tone={0.4} />
              <Pin x={297} y={660} tone={0.4} />
              <Marker x={269} y={212} />
            </>
          }
        >
          <Bottom>
            <div className={`flex h-[66px] items-center bg-white pr-[25px] pl-4 ${CARD}`}>
              <PlaceRing />
              <span className="w-[17px]" />
              <SearchField label="Search" value="Starbucks" />
              <MicButton />
            </div>
          </Bottom>
        </Phone>
      </div>

      <div className="flex justify-between">
        <Phone label="Place" scene={<FadedPins />}>
          <Bottom>
            <section className={`flex flex-col bg-white pb-[25px] ${CARD}`}>
              <PlaceInfo />
              <div className="mt-[46px]">
                <ModeTabs />
              </div>
              <div className="mt-[46px] flex justify-center">
                <MicButton />
              </div>
            </section>
          </Bottom>
        </Phone>

        <Phone label="Place, listening" scene={<FadedPins />}>
          <Bottom>
            <section className={`flex h-[289px] flex-col bg-linear-to-b from-[#055de9] to-[#003bc9] pb-[25px] ${CARD}`}>
              <PlaceInfo blue />
              <hr className="mt-[25px] border-[#0449c4]" />
              <p className="mt-[38px] flex items-center gap-[34px] pl-[35px] text-[13px] leading-5 text-white">
                <ListeningMark />
                Listening ...
              </p>
              <div className="mt-auto">
                <Waveform bars={QUIET_BARS} gap="gap-[13px]" mic="h-5 w-[18px]" />
              </div>
            </section>
          </Bottom>
        </Phone>

        <Phone
          label="Drive route"
          scene={
            <>
              <Route d={DRIVE_ROUTE} stroke="route-drive" />
              <Destination x={55} y={369} ring="#00a072" />
              <Marker x={269} y={212} />
            </>
          }
        >
          <Bottom>
            <TripCard mode="Drive" header={<TripHeader time="16 min" distance="(3.73 mi)" />} />
          </Bottom>
        </Phone>

        <Phone
          label="Navigation"
          fadeFrom={460}
          scene={
            <>
              <Route d={DRIVE_ROUTE} stroke="route-drive" />
              <Route d={`M190,224.8 L229,218 ${HOOK}`} stroke="route-ahead" />
              <Destination x={55} y={369} ring="#00a072" />
              <Stop x={269} y={208} color="#0560e6" r={13} />
              <Marker x={190} y={223} rotate={-98} />
            </>
          }
        >
          <Bottom>
            <section className={`flex h-[106px] items-center bg-[#1a1e25] pl-[27px] ${CARD}`}>
              <TurnLeftIcon arrow="#ffffff" road="#55585d" />
              <div className="ml-[27px] text-[13px] leading-[18px] whitespace-nowrap">
                <p className="text-[#75787d]">0.6 mi</p>
                <p className="text-white">Turn left onto Victory st</p>
              </div>
            </section>
            <section className={`flex h-[66px] items-center bg-white pr-[25px] pl-[26px] ${CARD}`}>
              <span className="text-[#0560e6]">
                <CarIcon />
              </span>
              <div className="ml-[27px] flex-1 text-[#2d323c]">
                <p className="text-[13px] leading-[18px]">2.87 mi</p>
                <p className="text-[10px] leading-[18px] font-medium">12 min</p>
              </div>
              <MicButton />
            </section>
          </Bottom>
        </Phone>
      </div>

      <div className="flex justify-between">
        <Phone
          label="Trip summary"
          view={{ x: -52, y: 113, scale: 1.5 }}
          scene={
            <>
              <Marker x={188} y={396} r={30} />
              <rect width="375" height="812" fill="#000000" opacity="0.905" />
            </>
          }
        >
          <Bottom>
            <section className="relative flex h-[293px] flex-col justify-end overflow-hidden rounded-[5px] bg-white pb-[25px]">
              <svg className="absolute inset-x-0 top-0 w-full" viewBox="0 0 339 300" aria-hidden="true">
                <g transform="scale(0.78) translate(55.6 -108.5)">
                  <use href="#city-map" />
                </g>
                <rect y="180" width="339" height="100" fill="url(#card-fade)" />
                <rect y="279" width="339" height="21" fill="#ffffff" />
                <g transform="scale(0.78) translate(55.6 -108.5)">
                  <Route d={DRIVE_ROUTE} stroke="route-done" width={7.4} />
                  <Stop x={55} y={369} color="#006241" r={13} />
                  <Stop x={269} y={208} color="#0560e6" r={13} />
                </g>
              </svg>
              <dl className="relative grid grid-cols-3 text-center">
                {[
                  ["Time", "19 min"],
                  ["Distance", "3.77 mi"],
                  ["Rating", "9.5"],
                ].map(([k, v]) => (
                  <div key={k} className="flex flex-col-reverse gap-[12px]">
                    <dt className="text-[10px] leading-[14px] text-[#9c9ea1]">{k}</dt>
                    <dd className="text-[13px] leading-5 text-[#2d323c]">{v}</dd>
                  </div>
                ))}
              </dl>
            </section>
          </Bottom>
        </Phone>

        <Phone
          label="Walk route"
          scene={
            <>
              <Route d={WALK_ROUTE} stroke="route-walk" />
              <Destination x={55} y={369} ring="#2bc1e4" />
              <Marker x={269} y={212} />
            </>
          }
        >
          <Bottom>
            <TripCard mode="Walk" header={<TripHeader time="37 min" distance="(3.49 mi)" />} />
          </Bottom>
        </Phone>

        <Phone
          label="Transit route"
          scene={
            <>
              <Route d="M244,332 L241,192 Q241,179 255,178 Q269,177 269,192 L269,206" stroke="route-foot" />
              <Route d="M63,344 L244,332" stroke="route-train" />
              <Destination x={55} y={369} ring="#1ec800" />
              <Stop x={63} y={344} color="#1ec800" />
              <Stop x={244} y={332} color="#1ec800" />
              <Marker x={270} y={212} />
            </>
          }
        >
          <Bottom>
            <TripCard mode="Transit" header={<TripHeader time="25 min" distance="(3.86 mi)" />} />
          </Bottom>
        </Phone>

        <Phone
          label="Uber nearby"
          scene={
            <>
              <circle cx="269" cy="212" r="60" fill="#0560e6" opacity="0.12" />
              {NEARBY_CABS.map(([x, y, r]) => (
                <circle key={`${x}-${y}`} cx={x} cy={y} r={r} fill="#2b4180" opacity={r === 4 ? 0.7 : 0.5} />
              ))}
              <circle cx="227" cy="216" r="6" fill="#2b4180" />
              <Destination x={55} y={369} />
              <Marker x={269} y={212} />
            </>
          }
        >
          <Bottom>
            <TripCard
              mode="Uber"
              header={
                <div className="flex h-[93px] items-center justify-center pt-2 text-[13px] leading-5 text-[#2d323c]">
                  <span className="mr-[5px] flex size-[26px] items-center justify-center rounded-full bg-[#eaebf1]">
                    <span className="size-[10px] rounded-full bg-[#2c4270]" />
                  </span>
                  <p className="pr-4">14 Uber nearby</p>
                </div>
              }
            />
          </Bottom>
        </Phone>
      </div>
    </div>
  );
}

/* ------------------------------------------------------------------ */
/* Car displays                                                         */
/* ------------------------------------------------------------------ */

const AUTO_CITY: View = { x: -270.8, y: 8.4, scale: 0.908 };

function AutoDisplay({
  label,
  wide = true,
  blue = false,
  view,
  scene,
  side,
  children,
}: {
  label: string;
  wide?: boolean;
  blue?: boolean;
  view: View;
  scene: React.ReactNode;
  side: React.ReactNode;
  children?: React.ReactNode;
}) {
  const left = wide ? 209 : 129;
  return (
    <article
      aria-label={label}
      className="w-[632px] rounded-[17px] bg-black p-[7px] shadow-[0_14px_24px_rgba(0,0,0,0.16)]"
    >
      <div className="relative flex h-[295px] overflow-hidden rounded-[11px]">
        <div
          className={`flex shrink-0 flex-col pb-[51px] text-white ${wide ? "w-[172px]" : "w-[106px]"} ${
            blue ? "bg-linear-to-b from-[#055de9] to-[#003bc9]" : "bg-black"
          }`}
        >
          {side}
        </div>
        <div className="relative flex-1 overflow-hidden">
          <MapScene viewBox={`${left} 0 ${754 - left} 360`} view={view}>
            <rect x={left} width="60" height="360" fill={blue ? "url(#panel-shade)" : "url(#panel-shade-dark)"} />
            <rect x="739" width="20" height="360" fill="#d5d5d5" />
            {scene}
          </MapScene>
        </div>
        {children}
      </div>
    </article>
  );
}

function SideMic() {
  return (
    <button type="button" aria-label="Speak" className="mx-auto mt-auto text-white">
      <MicIcon className="h-[23px] w-[21px]" />
    </button>
  );
}

function AssistantSteps({ blue = false, last }: { blue?: boolean; last?: "active" | "listening" }) {
  const firstRing = blue || last === "active" ? "border-white" : "border-[#f9c90e]";
  return (
    <>
      <p className={`mt-[19px] pr-[10px] text-center text-[11px] leading-[14px] ${blue ? "text-white/45" : "text-[#707070]"}`}>
        12:56
      </p>
      <div className="mt-[19px] flex h-[43px] pl-[25px]">
        <div className="flex flex-col items-center pt-[2px]">
          <span className={`size-3 rounded-full border-2 ${firstRing}`} />
          <span className={`w-[2px] flex-1 ${blue ? "bg-white/25" : "bg-[#333333]"}`} />
        </div>
        <p className="ml-[10px] text-[11px] leading-[17px] whitespace-nowrap">
          Search for the
          <br />
          nearest Starbucks
        </p>
      </div>
      <div className="mr-[10px] ml-[9px] flex h-[47px] items-center rounded-[5px] bg-white pl-[14px] text-black">
        <span className="w-[23px] text-[15px] leading-5 font-extrabold text-[#006241]">7</span>
        <span className="text-[11px] leading-[17px] font-medium whitespace-nowrap">Starbucks nearby</span>
      </div>
      {last === "active" && (
        <div className="flex h-[28px] pl-[25px]">
          <div className="flex flex-col items-center">
            <span className="h-[12px] w-[2px] bg-[#333333]" />
            <span className="size-3 rounded-full border-2 border-[#f9c90e]" />
          </div>
          <p className="ml-[10px] pt-[9px] text-[11px] leading-[17px]">Start navigation</p>
        </div>
      )}
      {last === "listening" && (
        <p className="mt-[30px] flex items-center gap-[9px] pl-[25px] text-[11px] leading-[17px] whitespace-nowrap">
          <ListeningMark />
          Start navigation ...
        </p>
      )}
    </>
  );
}

function AutoRows() {
  return (
    <div className="flex flex-col gap-[97px] px-[168px]">
      <div className="flex justify-between">
        <AutoDisplay
          label="Idle"
          wide={false}
          view={{ x: -31, y: 85, scale: 1.43 }}
          scene={<Marker x={434} y={180} r={30} />}
          side={
            <>
              <p className="mt-[42px] text-center text-base leading-5">12:56</p>
              <p className="mt-[1px] text-center text-[13px] leading-[18px] text-[#666666]">Wed.</p>
              <SideMic />
            </>
          }
        />
        <AutoDisplay
          label="Listening"
          blue
          view={{ x: -60.3, y: 85, scale: 1.43 }}
          scene={<Marker x={475} y={180} r={30} />}
          side={
            <>
              <p className="mt-[38px] text-center text-[13px] leading-5 font-medium">12:56</p>
              <p className="mt-[71px] flex items-center gap-[24px] pl-[25px] text-[11px] leading-5 font-medium">
                <ListeningMark />
                Listening
              </p>
              <div className="mt-auto">
                <Waveform bars={QUIET_BARS} gap="gap-[10px]" mic="h-[23px] w-[21px]" />
              </div>
            </>
          }
        />
      </div>

      <div className="flex justify-between">
        <AutoDisplay
          label="Results"
          view={AUTO_CITY}
          scene={
            <>
              {AUTO_PINS.map((p) => (
                <Pin key={p.x} {...p} />
              ))}
              <Pin x={478} y={247} />
              <Marker x={492} y={180} />
            </>
          }
          side={
            <>
              <AssistantSteps />
              <SideMic />
            </>
          }
        />
        <AutoDisplay
          label="Result, listening"
          blue
          view={AUTO_CITY}
          scene={
            <>
              {AUTO_PINS.map((p) => (
                <Pin key={p.x} {...p} faded />
              ))}
              <Pin x={479} y={247} />
            </>
          }
          side={
            <>
              <AssistantSteps blue last="listening" />
              <div className="mt-auto">
                <Waveform bars={LOUD_BARS} gap="gap-[10px]" mic="h-[23px] w-[21px]" />
              </div>
            </>
          }
        >
          <Callout className="top-[128px] left-[220px]" />
        </AutoDisplay>
      </div>

      <div className="flex justify-between">
        <AutoDisplay
          label="Route"
          view={AUTO_CITY}
          scene={
            <>
              {AUTO_PINS.map((p) => (
                <Pin key={p.x} {...p} faded />
              ))}
              <Route
                d="M483,251 L482,236 Q481,229 475,226 Q470,222 470,216 L468,166 Q468,153 480,153 Q491,153 492,168 V180"
                stroke="route-car"
              />
              <Destination x={484} y={251} ring="#00a072" />
              <Marker x={491} y={180} />
            </>
          }
          side={
            <>
              <AssistantSteps last="active" />
              <SideMic />
            </>
          }
        />
        <AutoDisplay
          label="Turn by turn"
          wide={false}
          view={{ x: -58.9, y: 125.9, scale: 1.6 }}
          scene={
            <>
              <Route
                d="M500,251 V222 Q499,212 491,205 Q483,198 483,186 L480,108 Q480,87 502,86 Q523,85 526,108 V125"
                stroke="route-car-near"
                width={15}
              />
              <Destination x={500} y={251} ring="#00a072" big />
              <Marker x={526} y={133} r={30} />
            </>
          }
          side={
            <>
              <p className="mt-[132px] text-center text-[13px] leading-5">2.67 mi</p>
              <p className="mt-[1px] text-center text-[10px] leading-[14px]">10 min</p>
              <SideMic />
            </>
          }
        >
          <section className="absolute top-[10px] left-[10px] flex h-[106px] w-[277px] items-center rounded-[5px] bg-white pl-[27px] shadow-[0_14px_22px_rgba(0,0,0,0.2)]">
            <TurnLeftIcon arrow="#0560e6" road="#b9bbbe" />
            <div className="ml-[27px] text-[13px] leading-[18px] whitespace-nowrap">
              <p className="text-[#8d8f93]">0.2 mi</p>
              <p className="text-black">Turn left onto Victory st</p>
            </div>
          </section>
        </AutoDisplay>
      </div>
    </div>
  );
}

/* ------------------------------------------------------------------ */
/* Page                                                                 */
/* ------------------------------------------------------------------ */

export default function App() {
  return (
    <main className="relative min-h-screen overflow-hidden bg-[#f0f2f1] pb-[152px] font-['Noto_Sans',sans-serif]">
      <SharedDefs />
      <Backdrop />
      <div className="relative">
        <header className="flex items-start justify-between pt-[131px] pr-[168px] pb-[120px] pl-[140px]">
          <div>
            <h1 className="text-[111px] leading-[110px] font-black whitespace-nowrap text-black">MAP UI KIT</h1>
            <p className="mt-5 text-[57px] leading-[57px] font-medium text-[#055de9]">iOS &amp; Auto</p>
          </div>
          <div className="mt-[65px] flex h-[58px] items-center gap-5 rounded-full bg-white pr-6 pl-5 shadow-[0_14px_24px_rgba(0,0,0,0.1)]">
            <GemIcon />
            <span className="text-[22px] leading-7 text-[#8492aa]">20 Screens</span>
          </div>
        </header>
        <PhoneRows />
        <div className="h-[152px]" />
        <AutoRows />
      </div>
    </main>
  );
}
